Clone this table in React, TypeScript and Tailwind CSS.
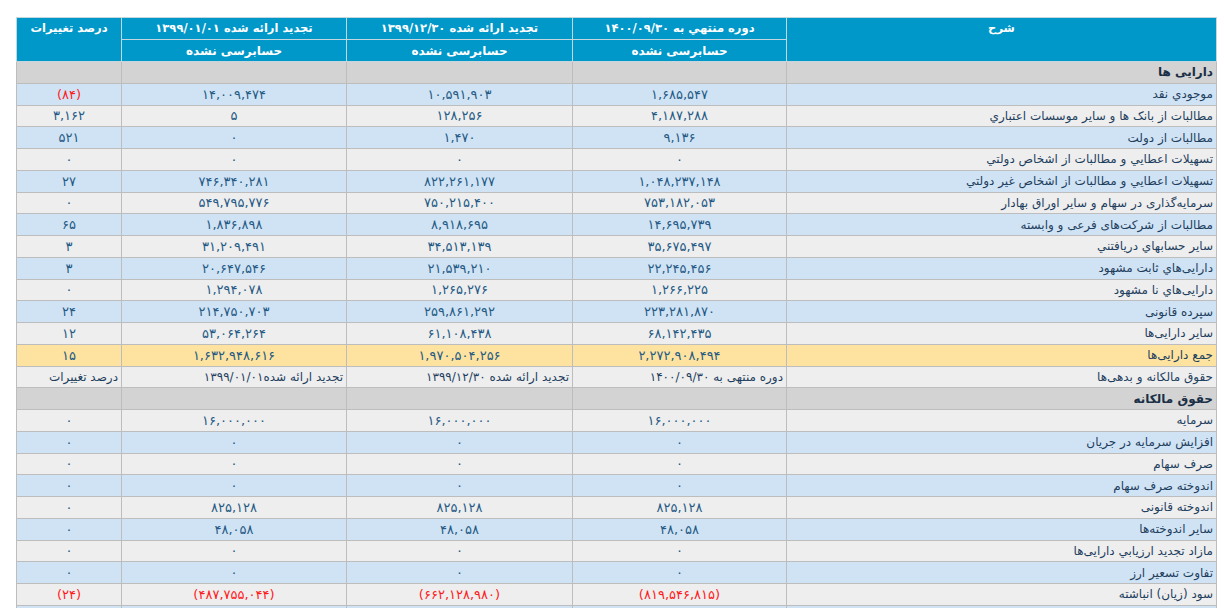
import React from "react";

type Row = {
  label: string;
  kind: "section" | "blue" | "gray" | "total" | "subhead";
  vals?: string[];
};

const rows: Row[] = [
  { label: "دارایی ها", kind: "section" },
  { label: "موجودي نقد", kind: "blue", vals: ["۱,۶۸۵,۵۴۷", "۱۰,۵۹۱,۹۰۳", "۱۴,۰۰۹,۴۷۴", "(۸۴)"] },
  { label: "مطالبات از بانک ها و سایر موسسات اعتباري", kind: "gray", vals: ["۴,۱۸۷,۲۸۸", "۱۲۸,۲۵۶", "۵", "۳,۱۶۲"] },
  { label: "مطالبات از دولت", kind: "blue", vals: ["۹,۱۳۶", "۱,۴۷۰", "۰", "۵۲۱"] },
  { label: "تسهيلات اعطايي و مطالبات از اشخاص دولتي", kind: "gray", vals: ["۰", "۰", "۰", "۰"] },
  { label: "تسهيلات اعطايي و مطالبات از اشخاص غير دولتي", kind: "blue", vals: ["۱,۰۴۸,۲۳۷,۱۴۸", "۸۲۲,۲۶۱,۱۷۷", "۷۴۶,۳۴۰,۲۸۱", "۲۷"] },
  { label: "سرمايه‌گذاری در سهام و ساير اوراق بهادار", kind: "gray", vals: ["۷۵۳,۱۸۲,۰۵۳", "۷۵۰,۲۱۵,۴۰۰", "۵۴۹,۷۹۵,۷۷۶", "۰"] },
  { label: "مطالبات از شرکت‌های فرعی و وابسته", kind: "blue", vals: ["۱۴,۶۹۵,۷۳۹", "۸,۹۱۸,۶۹۵", "۱,۸۳۶,۸۹۸", "۶۵"] },
  { label: "ساير حسابهاي دريافتني", kind: "gray", vals: ["۳۵,۶۷۵,۴۹۷", "۳۴,۵۱۳,۱۳۹", "۳۱,۲۰۹,۴۹۱", "۳"] },
  { label: "دارایی‌هاي ثابت مشهود", kind: "blue", vals: ["۲۲,۲۴۵,۴۵۶", "۲۱,۵۳۹,۲۱۰", "۲۰,۶۴۷,۵۴۶", "۳"] },
  { label: "دارایی‌هاي نا مشهود", kind: "gray", vals: ["۱,۲۶۶,۲۲۵", "۱,۲۶۵,۲۷۶", "۱,۲۹۴,۰۷۸", "۰"] },
  { label: "سپرده قانونی", kind: "blue", vals: ["۲۲۳,۲۸۱,۸۷۰", "۲۵۹,۸۶۱,۲۹۲", "۲۱۴,۷۵۰,۷۰۳", "۲۴"] },
  { label: "ساير دارایی‌ها", kind: "gray", vals: ["۶۸,۱۴۲,۴۳۵", "۶۱,۱۰۸,۴۳۸", "۵۳,۰۶۴,۲۶۴", "۱۲"] },
  { label: "جمع دارایی‌ها", kind: "total", vals: ["۲,۲۷۲,۹۰۸,۴۹۴", "۱,۹۷۰,۵۰۴,۲۵۶", "۱,۶۳۲,۹۴۸,۶۱۶", "۱۵"] },
  { label: "حقوق مالکانه و بدهی‌ها", kind: "subhead", vals: ["دوره منتهی به ۱۴۰۰/۰۹/۳۰", "تجدید ارائه شده ۱۳۹۹/۱۲/۳۰", "تجدید ارائه شده۱۳۹۹/۰۱/۰۱", "درصد تغییرات"] },
  { label: "حقوق مالکانه", kind: "section" },
  { label: "سرمايه", kind: "gray", vals: ["۱۶,۰۰۰,۰۰۰", "۱۶,۰۰۰,۰۰۰", "۱۶,۰۰۰,۰۰۰", "۰"] },
  { label: "افزايش سرمايه در جريان", kind: "blue", vals: ["۰", "۰", "۰", "۰"] },
  { label: "صرف سهام", kind: "gray", vals: ["۰", "۰", "۰", "۰"] },
  { label: "اندوخته صرف سهام", kind: "blue", vals: ["۰", "۰", "۰", "۰"] },
  { label: "اندوخته قانونی", kind: "gray", vals: ["۸۲۵,۱۲۸", "۸۲۵,۱۲۸", "۸۲۵,۱۲۸", "۰"] },
  { label: "ساير اندوخته‌ها", kind: "blue", vals: ["۴۸,۰۵۸", "۴۸,۰۵۸", "۴۸,۰۵۸", "۰"] },
  { label: "مازاد تجديد ارزيابي دارایی‌ها", kind: "gray", vals: ["۰", "۰", "۰", "۰"] },
  { label: "تفاوت تسعير ارز", kind: "blue", vals: ["۰", "۰", "۰", "۰"] },
  { label: "سود (زيان) انباشته", kind: "gray", vals: ["(۸۱۹,۵۴۶,۸۱۵)", "(۶۶۲,۱۲۸,۹۸۰)", "(۴۸۷,۷۵۵,۰۴۴)", "(۲۴)"] },
  { label: "", kind: "blue", vals: ["", "", "", ""] },
];

const bgFor = (k: Row["kind"]) => {
  switch (k) {
    case "section":
      return "bg-[#d3d3d3]";
    case "blue":
      return "bg-[#d0e3f4]";
    case "gray":
      return "bg-[#eeeeee]";
    case "total":
      return "bg-[#fde39f]";
    case "subhead":
      return "bg-[#eeeeee]";
  }
};

export default function App() {
  return (
    <div className="w-[1224px] h-[608px] overflow-hidden bg-white pl-[16px] pt-[17px]">
      <table
        dir="rtl"
        className="w-[1200px] table-fixed border-collapse border border-[#bdbdbd] text-[12px] text-[#1f3f5f]"
        style={{ fontFamily: '"DejaVu Sans", Tahoma, sans-serif' }}
      >
        <colgroup>
          <col className="w-[430px]" />
          <col className="w-[214px]" />
          <col className="w-[226px]" />
          <col className="w-[225px]" />
          <col className="w-[105px]" />
        </colgroup>
        <thead>
          <tr className="h-[22px] bg-[#0097c9] text-white font-bold text-[11.5px]">
            <th rowSpan={2} className="border border-[#c4d6de] align-top pt-[2px] font-bold">شرح</th>
            <th className="border border-[#c4d6de] font-bold">دوره منتهي به ۱۴۰۰/۰۹/۳۰</th>
            <th className="border border-[#c4d6de] font-bold">تجدید ارائه شده ۱۳۹۹/۱۲/۳۰</th>
            <th className="border border-[#c4d6de] font-bold">تجدید ارائه شده ۱۳۹۹/۰۱/۰۱</th>
            <th rowSpan={2} className="border border-[#c4d6de] align-top pt-[2px] font-bold">درصد تغییرات</th>
          </tr>
          <tr className="h-[22px] bg-[#0097c9] text-white">
            <th className="border border-[#c4d6de] font-bold">حسابرسی نشده</th>
            <th className="border border-[#c4d6de] font-bold">حسابرسی نشده</th>
            <th className="border border-[#c4d6de] font-bold">حسابرسی نشده</th>
          </tr>
        </thead>
        <tbody>
          {rows.map((r, i) => (
            <tr key={i} className={`h-[21.75px] ${bgFor(r.kind)}`}>
              <td
                className={`border border-[#bdbdbd] px-[3px] py-0 text-right whitespace-nowrap ${
                  r.kind === "section" ? "font-bold text-[#1a2f45]" : ""
                }`}
              >
                {r.label}
              </td>
              {r.kind === "section"
                ? [0, 1, 2, 3].map((j) => <td key={j} className="border border-[#bdbdbd]" />)
                : (r.vals || []).map((v, j) =>
                    r.kind === "subhead" ? (
                      <td key={j} className="border border-[#bdbdbd] py-0 px-[3px] whitespace-nowrap text-right">
                        {v}
                      </td>
                    ) : (
                      <td
                        key={j}
                        className={`border border-[#bdbdbd] py-0 px-[3px] whitespace-nowrap text-center text-[13px] leading-none tracking-[1px] ${
                          v.startsWith("(") ? "text-[#ff1a1a]" : "text-[#245a85]"
                        }`}
                      >
                        {v}
                      </td>
                    )
                  )}
            </tr>
          ))}
        </tbody>
      </table>
    </div>
  );
}
